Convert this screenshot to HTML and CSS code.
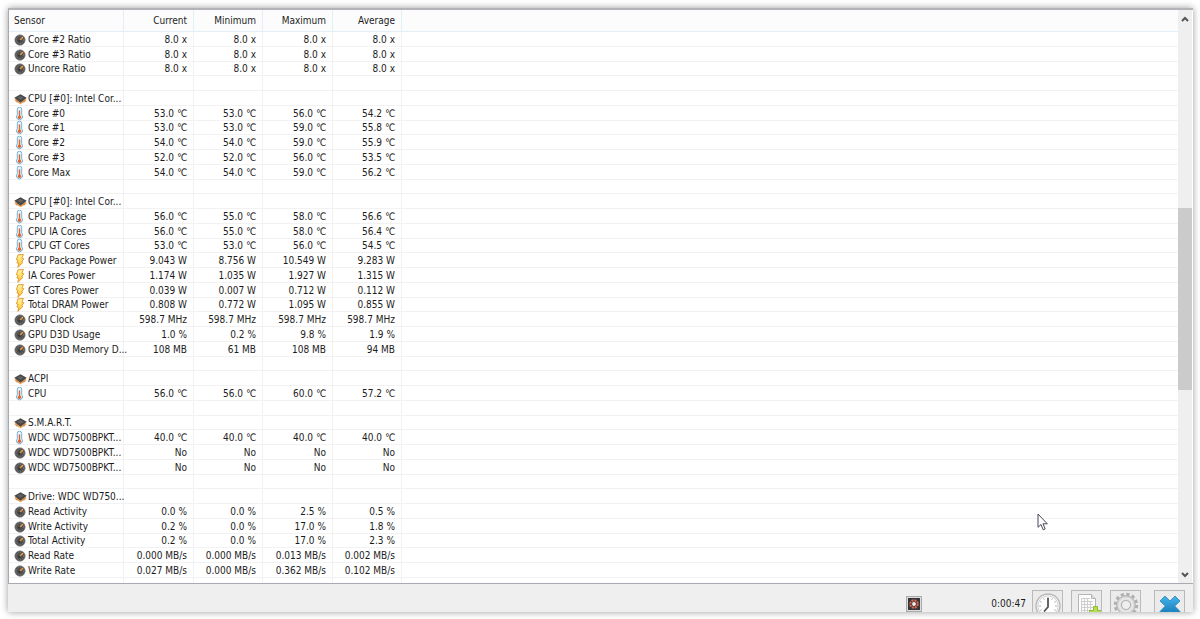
FILE: index.html
```html
<!DOCTYPE html>
<html lang="en">
<head>
<meta charset="utf-8">
<title>Sensor Status</title>
<link rel="stylesheet" href="styles.css">
</head>
<body>
<svg class="sprite" aria-hidden="true">
  <defs>
    <linearGradient id="bolt-fill" x1="0" y1="0" x2="0" y2="1"><stop offset="0" stop-color="#fff6a8"/><stop offset="1" stop-color="#ffc21c"/></linearGradient>
    <linearGradient id="cross-fill" x1="0" y1="0" x2="0" y2="1"><stop offset="0" stop-color="#45b4ea"/><stop offset="1" stop-color="#1272b4"/></linearGradient>
  </defs>
  <symbol id="gauge" viewBox="0 -1 14 14">
    <circle cx="6" cy="6" r="5.2" fill="#505050" stroke="#888" stroke-width=".7"/>
    <circle cx="6" cy="6" r="3.7" fill="none" stroke="#858585" stroke-width="1" stroke-dasharray="1 1.4"/>
    <path d="M5.6 6.4 9 3" stroke="#f0a040" stroke-width="1.4"/>
    <circle cx="5.4" cy="6.6" r="1.2" fill="#333"/>
  </symbol>
  <symbol id="chip" viewBox="0 0 14 14">
    <path d="M.8 6.500v2.500L6.500 12.300 12.200 9V6.500z" fill="#eda760"/>
    <path d="M3 8.500v1.800M10 8.500v1.800" stroke="#a8662c" stroke-width=".8"/>
    <path d="M.3 5.800 6.500 2.300 12.700 5.800 6.500 10.800z" fill="#484848"/>
    <path d="M3.300 5.700 6.500 3.900l3.200 1.800-3.200 2z" fill="#626262"/>
  </symbol>
  <symbol id="thermo" viewBox="-2 0 14 14">
    <path d="M1.300 2.300a2.200 2.200 0 0 1 4.400 0v5.500a3 3 0 1 1-4.400 0z" fill="#e4f3fc" stroke="#79b0d2" stroke-width="1"/>
    <path d="M3.500 3.500v6" stroke="#e2632c" stroke-width="1.400"/>
    <circle cx="3.500" cy="10.200" r="1.700" fill="#e2632c"/>
  </symbol>
  <symbol id="bolt" viewBox="-2 0 14 14">
    <path d="M2 .8 7.400.5 5.900 4.200l1.900.5-2.100 3.200 1.200.5L1.800 13.400l1-4-1.900-.5 1.200-2.600L.4 5.800z" fill="url(#bolt-fill)" stroke="#df942c" stroke-width=".9"/>
  </symbol>
</svg>

<div class="window">
  <main class="sensors">
    <table class="grid">
      <colgroup><col class="col-name"><col class="col-70"><col class="col-69"><col class="col-70"><col class="col-69"><col></colgroup>
      <thead><tr><th>Sensor</th><th>Current</th><th>Minimum</th><th>Maximum</th><th>Average</th><th></th></tr></thead>
      <tbody>
        <tr><td><svg class="icon"><use href="#gauge"/></svg>Core #2 Ratio</td><td>8.0 x</td><td>8.0 x</td><td>8.0 x</td><td>8.0 x</td><td></td></tr>
        <tr><td><svg class="icon"><use href="#gauge"/></svg>Core #3 Ratio</td><td>8.0 x</td><td>8.0 x</td><td>8.0 x</td><td>8.0 x</td><td></td></tr>
        <tr><td><svg class="icon"><use href="#gauge"/></svg>Uncore Ratio</td><td>8.0 x</td><td>8.0 x</td><td>8.0 x</td><td>8.0 x</td><td></td></tr>
        <tr><td>&nbsp;</td><td></td><td></td><td></td><td></td><td></td></tr>
        <tr><td><svg class="icon"><use href="#chip"/></svg>CPU [#0]: Intel Cor...</td><td></td><td></td><td></td><td></td><td></td></tr>
        <tr><td><svg class="icon"><use href="#thermo"/></svg>Core #0</td><td>53.0 ℃</td><td>53.0 ℃</td><td>56.0 ℃</td><td>54.2 ℃</td><td></td></tr>
        <tr><td><svg class="icon"><use href="#thermo"/></svg>Core #1</td><td>53.0 ℃</td><td>53.0 ℃</td><td>59.0 ℃</td><td>55.8 ℃</td><td></td></tr>
        <tr><td><svg class="icon"><use href="#thermo"/></svg>Core #2</td><td>54.0 ℃</td><td>54.0 ℃</td><td>59.0 ℃</td><td>55.9 ℃</td><td></td></tr>
        <tr><td><svg class="icon"><use href="#thermo"/></svg>Core #3</td><td>52.0 ℃</td><td>52.0 ℃</td><td>56.0 ℃</td><td>53.5 ℃</td><td></td></tr>
        <tr><td><svg class="icon"><use href="#thermo"/></svg>Core Max</td><td>54.0 ℃</td><td>54.0 ℃</td><td>59.0 ℃</td><td>56.2 ℃</td><td></td></tr>
        <tr><td>&nbsp;</td><td></td><td></td><td></td><td></td><td></td></tr>
        <tr><td><svg class="icon"><use href="#chip"/></svg>CPU [#0]: Intel Cor...</td><td></td><td></td><td></td><td></td><td></td></tr>
        <tr><td><svg class="icon"><use href="#thermo"/></svg>CPU Package</td><td>56.0 ℃</td><td>55.0 ℃</td><td>58.0 ℃</td><td>56.6 ℃</td><td></td></tr>
        <tr><td><svg class="icon"><use href="#thermo"/></svg>CPU IA Cores</td><td>56.0 ℃</td><td>55.0 ℃</td><td>58.0 ℃</td><td>56.4 ℃</td><td></td></tr>
        <tr><td><svg class="icon"><use href="#thermo"/></svg>CPU GT Cores</td><td>53.0 ℃</td><td>53.0 ℃</td><td>56.0 ℃</td><td>54.5 ℃</td><td></td></tr>
        <tr><td><svg class="icon"><use href="#bolt"/></svg>CPU Package Power</td><td>9.043 W</td><td>8.756 W</td><td>10.549 W</td><td>9.283 W</td><td></td></tr>
        <tr><td><svg class="icon"><use href="#bolt"/></svg>IA Cores Power</td><td>1.174 W</td><td>1.035 W</td><td>1.927 W</td><td>1.315 W</td><td></td></tr>
        <tr><td><svg class="icon"><use href="#bolt"/></svg>GT Cores Power</td><td>0.039 W</td><td>0.007 W</td><td>0.712 W</td><td>0.112 W</td><td></td></tr>
        <tr><td><svg class="icon"><use href="#bolt"/></svg>Total DRAM Power</td><td>0.808 W</td><td>0.772 W</td><td>1.095 W</td><td>0.855 W</td><td></td></tr>
        <tr><td><svg class="icon"><use href="#gauge"/></svg>GPU Clock</td><td>598.7 MHz</td><td>598.7 MHz</td><td>598.7 MHz</td><td>598.7 MHz</td><td></td></tr>
        <tr><td><svg class="icon"><use href="#gauge"/></svg>GPU D3D Usage</td><td>1.0 %</td><td>0.2 %</td><td>9.8 %</td><td>1.9 %</td><td></td></tr>
        <tr><td><svg class="icon"><use href="#gauge"/></svg>GPU D3D Memory D...</td><td>108 MB</td><td>61 MB</td><td>108 MB</td><td>94 MB</td><td></td></tr>
        <tr><td>&nbsp;</td><td></td><td></td><td></td><td></td><td></td></tr>
        <tr><td><svg class="icon"><use href="#chip"/></svg>ACPI</td><td></td><td></td><td></td><td></td><td></td></tr>
        <tr><td><svg class="icon"><use href="#thermo"/></svg>CPU</td><td>56.0 ℃</td><td>56.0 ℃</td><td>60.0 ℃</td><td>57.2 ℃</td><td></td></tr>
        <tr><td>&nbsp;</td><td></td><td></td><td></td><td></td><td></td></tr>
        <tr><td><svg class="icon"><use href="#chip"/></svg>S.M.A.R.T.</td><td></td><td></td><td></td><td></td><td></td></tr>
        <tr><td><svg class="icon"><use href="#thermo"/></svg>WDC WD7500BPKT...</td><td>40.0 ℃</td><td>40.0 ℃</td><td>40.0 ℃</td><td>40.0 ℃</td><td></td></tr>
        <tr><td><svg class="icon"><use href="#gauge"/></svg>WDC WD7500BPKT...</td><td>No</td><td>No</td><td>No</td><td>No</td><td></td></tr>
        <tr><td><svg class="icon"><use href="#gauge"/></svg>WDC WD7500BPKT...</td><td>No</td><td>No</td><td>No</td><td>No</td><td></td></tr>
        <tr><td>&nbsp;</td><td></td><td></td><td></td><td></td><td></td></tr>
        <tr><td><svg class="icon"><use href="#chip"/></svg>Drive: WDC WD750...</td><td></td><td></td><td></td><td></td><td></td></tr>
        <tr><td><svg class="icon"><use href="#gauge"/></svg>Read Activity</td><td>0.0 %</td><td>0.0 %</td><td>2.5 %</td><td>0.5 %</td><td></td></tr>
        <tr><td><svg class="icon"><use href="#gauge"/></svg>Write Activity</td><td>0.2 %</td><td>0.0 %</td><td>17.0 %</td><td>1.8 %</td><td></td></tr>
        <tr><td><svg class="icon"><use href="#gauge"/></svg>Total Activity</td><td>0.2 %</td><td>0.0 %</td><td>17.0 %</td><td>2.3 %</td><td></td></tr>
        <tr><td><svg class="icon"><use href="#gauge"/></svg>Read Rate</td><td>0.000 MB/s</td><td>0.000 MB/s</td><td>0.013 MB/s</td><td>0.002 MB/s</td><td></td></tr>
        <tr><td><svg class="icon"><use href="#gauge"/></svg>Write Rate</td><td>0.027 MB/s</td><td>0.000 MB/s</td><td>0.362 MB/s</td><td>0.102 MB/s</td><td></td></tr>
      </tbody>
      <tfoot><tr><td></td><td></td><td></td><td></td><td></td><td></td></tr></tfoot>
    </table>
    <div class="scrollbar">
      <button class="arrow" type="button" aria-label="Scroll up"><svg width="8" height="6" viewBox="0 0 8 6"><path d="M1 5 4 2l3 3" fill="none" stroke="#555" stroke-width="2"/></svg></button>
      <div class="thumb"></div>
      <button class="arrow arrow-down" type="button" aria-label="Scroll down"><svg width="8" height="6" viewBox="0 0 8 6"><path d="M1 1l3 3 3-3" fill="none" stroke="#555" stroke-width="2"/></svg></button>
    </div>
  </main>

  <footer class="toolbar">
    <button class="fan" type="button" aria-label="Fan control">
      <svg width="12" height="12" viewBox="0 0 12 12"><rect width="12" height="12" fill="#34343c"/><circle cx="6" cy="6" r="3.7" fill="none" stroke="#d8684c" stroke-width="2.2" stroke-dasharray="2 .9"/><circle cx="6" cy="6" r="1.9" fill="#f6eeee"/></svg>
    </button>
    <span class="elapsed">0:00:47</span>
    <button class="tool" type="button" aria-label="Reset timer">
      <svg width="28" height="28" viewBox="0 0 28 28"><circle cx="14" cy="14" r="12" fill="#fafafa" stroke="#b9b9b9" stroke-width="1.4"/><circle cx="14" cy="14" r="10.2" fill="#fff" stroke="#cfcfcf"/><path d="M14 5v2M5 14h2M21 14h2M9.5 6.2l.8 1.5M18.5 6.2l-.8 1.5M6.2 9.5l1.5.8M21.8 9.5l-1.5.8M6.2 18.5l1.5-.8M21.8 18.5l-1.5-.8" stroke="#aaa"/><path d="M14 6v9l-4 4.5" fill="none" stroke="#555" stroke-width="1.8"/></svg>
    </button>
    <button class="tool" type="button" aria-label="Log to file">
      <svg width="28" height="28" viewBox="0 0 28 28"><path d="M5.500 2.500h13l4 4v20h-17z" fill="#fcfcfc" stroke="#b5b5b5"/><path d="M18.500 2.500v4h4" fill="#ddd" stroke="#b5b5b5"/><path d="M8 6.500h9M8 9.500h12M8 12.500h12M8 15.500h12M8 18.500h9M8.500 6v14M11.500 6v14M14.500 6v14M17.500 9v10" stroke="#cecece"/><path d="M20.500 14.500h4v4h4v4h-4v4h-4v-4h-4v-4h4z" fill="#b7df4f" stroke="#8fba30"/></svg>
    </button>
    <button class="tool" type="button" aria-label="Settings">
      <svg width="28" height="28" viewBox="0 0 28 28"><circle cx="14" cy="13" r="10.700" fill="none" stroke="#b0b0b0" stroke-width="3" stroke-dasharray="3.200 2.400"/><circle cx="14" cy="13" r="9.300" fill="#d8d8d8" stroke="#b0b0b0"/><circle cx="14" cy="13" r="6.600" fill="none" stroke="#e9e9e9" stroke-width="1.500"/><circle cx="14" cy="13" r="4.500" fill="#efefef" stroke="#b0b0b0"/></svg>
    </button>
    <button class="tool close" type="button" aria-label="Close">
      <svg width="28" height="28" viewBox="0 0 28 28"><path d="M9 4 14 9 19 4 24 9 18.700 14 24 19.500 19 24.500 14 19 9 24.500 4 19.500 9.300 14 4 9z" fill="url(#cross-fill)" stroke="#2386bd" stroke-width=".8" stroke-linejoin="round"/></svg>
    </button>
  </footer>
</div>

<svg class="cursor" width="11" height="18" viewBox="0 0 11 18" aria-hidden="true"><path d="M1 1v13.300l3-2.800 2.200 5.300 2-.9-2.200-5.100h4.300z" fill="#fff" stroke="#46465a"/></svg>
</body>
</html>
```
FILE: styles.css
```css
* {
  box-sizing: border-box;
}

body {
  margin: 0;
  height: 100vh;
  padding: 8px 7px 7px 8px;
  background: #fff;
  color: #1c1c1c;
  font-family: "DejaVu Sans Condensed", "DejaVu Sans", sans-serif;
  font-size: 10px;
  line-height: 12px;
}

.sprite {
  position: absolute;
  width: 0;
  height: 0;
}

.window {
  display: flex;
  flex-direction: column;
  height: 100%;
  background: #efefef;
  box-shadow: 0 0 7px rgba(0, 0, 0, 0.4);
}

.sensors {
  display: flex;
  flex: 1;
  min-height: 0;
  padding-right: 1px;
  border: 1px solid #a9a9b1;
  border-top: 2px solid #b4b4b8;
  border-right: 0;
  background: #fff;
}

.grid {
  flex: 1;
  width: 100%;
  height: 100%;
  table-layout: fixed;
  border-collapse: separate;
  border-spacing: 0;
}

.col-name {
  width: 115px;
}

.col-70 {
  width: 70px;
}

.col-69 {
  width: 69px;
}

.grid th,
.grid td {
  padding: 0 6px 0 0;
  border-right: 1px solid #f2f2f2;
  border-bottom: 1px solid #f2f2f2;
  text-align: right;
  vertical-align: bottom;
  white-space: nowrap;
  font-weight: normal;
}

.grid th {
  height: 22px;
  padding-bottom: 4px;
  border-color: #e3eff8;
  background: #fcfcfc;
}

.grid th:first-child,
.grid td:first-child {
  padding-right: 0;
  padding-left: 5px;
  text-align: left;
}

.grid th:last-child,
.grid td:last-child {
  border-right: 0;
}

.grid tfoot td {
  height: 5px;
  border-bottom: 0;
}

.icon {
  width: 14px;
  height: 14px;
  margin: -1px 0;
  vertical-align: top;
}

.scrollbar {
  display: grid;
  grid-template-rows: 17px 181fr 182fr 176fr 17px;
  width: 14px;
  background: #efefef;
}

.thumb {
  grid-row: 3;
  background: #cbcbcb;
}

.arrow {
  display: grid;
  place-items: center;
  padding: 0;
  border: 0;
  background: none;
}

.arrow-down {
  grid-row: 5;
}

.toolbar {
  display: flex;
  align-items: flex-start;
  height: 28px;
  padding: 6px 8px 0 0;
  overflow: hidden;
  justify-content: flex-end;
}

.fan {
  width: 16px;
  height: 16px;
  margin: 6px 69px 0 0;
  padding: 1px;
  border: 1px solid #aaa;
  background: #ddd;
}

.fan svg {
  display: block;
}

.elapsed {
  margin: 8px 6px 0 0;
}

.tool {
  display: grid;
  place-items: center;
  width: 31px;
  height: 31px;
  margin-right: 8px;
  padding: 0;
  border: 1px solid #b9b9b9;
  background: #ebebeb;
}

.tool:nth-last-child(2) {
  margin-right: 13px;
}

.close {
  margin-right: 0;
}

.cursor {
  position: absolute;
  left: 1037px;
  top: 513px;
}
```
